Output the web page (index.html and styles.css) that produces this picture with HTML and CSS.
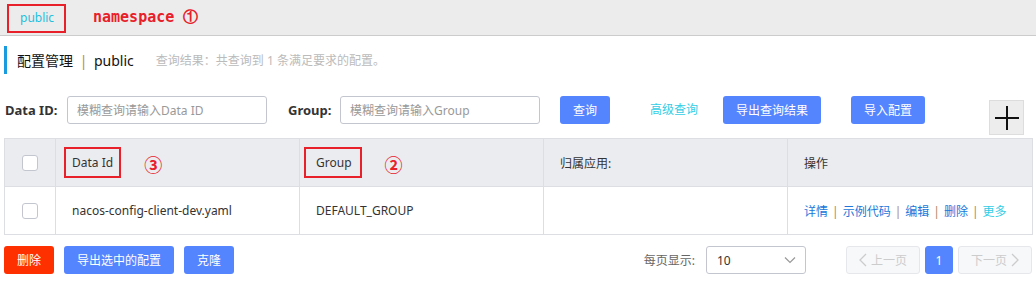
FILE: index.html
```html
<!DOCTYPE html>
<html lang="zh">

<head>
    <meta charset="UTF-8" />
    <meta name="viewport" content="width=device-width, initial-scale=1.0" />
    <title>配置管理</title>
    <link rel="stylesheet" href="styles.css">
</head>

<body>

    <!-- Namespace bar -->
    <div class="ns-bar">
        <span class="ns-tab mark">public</span>
        <span class="ns-note">namespace ①</span>
    </div>

    <div class="page">
        <!-- Title -->
        <div class="title-row">
            <h2>配置管理 <span class="sep">|</span> public</h2>
            <span class="result-tip">查询结果：共查询到 1 条满足要求的配置。</span>
        </div>

        <!-- Search -->
        <div class="search-row">
            <label class="field-label">Data ID:</label>
            <input class="field" type="text" placeholder="模糊查询请输入Data ID">
            <label class="field-label group-label">Group:</label>
            <input class="field" type="text" placeholder="模糊查询请输入Group">
            <button class="btn btn-query">查询</button>
            <a class="adv-link">高级查询</a>
            <button class="btn btn-export">导出查询结果</button>
            <button class="btn btn-import">导入配置</button>
            <button class="add-btn">
                <svg width="26" height="26" viewBox="0 0 26 26"><path d="M13 1v24M1 13h24" stroke="#111" stroke-width="2"/></svg>
            </button>
        </div>

        <!-- Table -->
        <table class="cfg-table">
            <colgroup>
                <col style="width:51px">
                <col style="width:244px">
                <col style="width:244px">
                <col style="width:244px">
                <col style="width:245px">
            </colgroup>
            <thead>
                <tr>
                    <th class="chk-cell"><span class="checkbox"></span></th>
                    <th><span class="mark head-mark">Data Id</span><span class="num">③</span></th>
                    <th><span class="mark head-mark group-mark">Group</span><span class="num">②</span></th>
                    <th>归属应用:</th>
                    <th>操作</th>
                </tr>
            </thead>
            <tbody>
                <tr>
                    <td class="chk-cell"><span class="checkbox"></span></td>
                    <td>nacos-config-client-dev.yaml</td>
                    <td>DEFAULT_GROUP</td>
                    <td></td>
                    <td class="ops">
                        <a>详情</a><span class="bar">|</span><a>示例代码</a><span class="bar">|</span><a>编辑</a><span class="bar">|</span><a>删除</a><span class="bar">|</span><a class="more">更多</a>
                    </td>
                </tr>
            </tbody>
        </table>

        <!-- Footer -->
        <div class="foot-row">
            <button class="btn btn-danger">删除</button>
            <button class="btn btn-export-sel">导出选中的配置</button>
            <button class="btn btn-clone">克隆</button>
            <div class="pager">
                <span class="pager-label">每页显示:</span>
                <div class="select">
                    <span>10</span>
                    <svg width="12" height="8" viewBox="0 0 12 8"><path d="M1 1.5l5 5 5-5" fill="none" stroke="#999" stroke-width="1.2"/></svg>
                </div>
                <button class="page-btn prev">
                    <svg width="8" height="14" viewBox="0 0 8 14"><path d="M7 1L1 7l6 6" fill="none" stroke="#ccc" stroke-width="1.3"/></svg>
                    上一页
                </button>
                <button class="page-btn current">1</button>
                <button class="page-btn next">
                    下一页
                    <svg width="8" height="14" viewBox="0 0 8 14"><path d="M1 1l6 6-6 6" fill="none" stroke="#ccc" stroke-width="1.3"/></svg>
                </button>
            </div>
        </div>
    </div>

</body>

</html>
```

FILE: styles.css
```css
* {
    box-sizing: border-box;
    margin: 0;
    padding: 0;
}

body {
    background: #fff;
    color: #333;
    font-family: "Noto Sans", "Noto Sans CJK SC", sans-serif;
    font-size: 12px;
}

.mark {
    border: 2px solid #e8202a;
}

/* Namespace bar */

.ns-bar {
    height: 36px;
    background: #ececec;
    border-bottom: 1px solid #ccc;
    display: flex;
    align-items: flex-start;
    padding: 4px 0 0 7px;
}

.ns-tab {
    width: 59px;
    height: 29px;
    color: #1ec0de;
    padding: 3px 0 0 11px;
    font-size: 12px;
}

.ns-note {
    margin: 4px 0 0 27px;
    color: #e8202a;
    font-family: "DejaVu Sans Mono", monospace;
    font-weight: bold;
    font-size: 15px;
}

.page {
    padding: 0 4px;
}

/* Title */

.title-row {
    margin-top: 10px;
    height: 28px;
    display: flex;
    align-items: center;
    border-left: 3px solid #1a9be0;
    padding-left: 10px;
}

.title-row h2 {
    font-size: 14px;
    font-weight: normal;
    color: #111;
}

.title-row .sep {
    color: #c38a28;
    margin: 0 3px;
}

.result-tip {
    margin-left: 22px;
    color: #bbb;
    font-size: 12px;
}

/* Search */

.search-row {
    margin-top: 22px;
    display: flex;
    align-items: flex-start;
    height: 42px;
}

.field-label {
    font-weight: bold;
    font-size: 13px;
    color: #333;
    line-height: 28px;
    width: 63px;
    padding-left: 1px;
}

.group-label {
    margin-left: 20px;
    width: 53px;
}

.field {
    width: 200px;
    height: 28px;
    border: 1px solid #c4c6cf;
    border-radius: 3px;
    padding: 0 9px;
    font: inherit;
    font-size: 12px;
}

.field::placeholder {
    color: #999;
}

.btn {
    height: 28px;
    border: none;
    border-radius: 3px;
    background: #5584ff;
    color: #fff;
    font: inherit;
    font-size: 12px;
    cursor: pointer;
}

.btn-query {
    width: 50px;
    margin-left: 20px;
}

.adv-link {
    color: #33cde5;
    line-height: 28px;
    margin-left: 40px;
}

.btn-export {
    width: 98px;
    margin-left: 25px;
}

.btn-import {
    width: 74px;
    margin-left: 30px;
}

.add-btn {
    margin-left: 64px;
    margin-top: 4px;
    width: 35px;
    height: 35px;
    background: #ededed;
    border: 1px solid #ddd;
    display: flex;
    align-items: center;
    justify-content: center;
}

/* Table */

.cfg-table {
    width: 1028px;
    border-collapse: collapse;
    table-layout: fixed;
}

.cfg-table th,
.cfg-table td {
    border: 1px solid #dcdee3;
    height: 48px;
    text-align: left;
    padding: 0 16px;
    font-weight: normal;
    color: #333;
}

.cfg-table th {
    background: #ebecf0;
}

.cfg-table .chk-cell {
    padding: 0 0 0 17px;
}

.checkbox {
    display: block;
    width: 16px;
    height: 16px;
    border: 1px solid #c4c6cf;
    border-radius: 3px;
    background: #fff;
}

.head-mark {
    display: inline-block;
    padding: 5px 6px;
    margin-left: -8px;
}

.group-mark {
    margin-left: -12px;
    padding: 5px 8px 5px 10px;
}

.num {
    color: #e8202a;
    font-size: 18px;
    font-weight: bold;
    margin-left: 23px;
    vertical-align: middle;
}

.ops a {
    color: #2077da;
}

.ops .bar {
    color: #b0865a;
    margin: 0 4px;
}

.ops .more {
    color: #33cde5;
}

/* Footer */

.foot-row {
    margin-top: 11px;
    display: flex;
    align-items: center;
}

.btn-danger {
    background: #ff3000;
    width: 50px;
}

.btn-export-sel {
    width: 110px;
    margin-left: 10px;
}

.btn-clone {
    width: 50px;
    margin-left: 10px;
}

.pager {
    margin-left: auto;
    display: flex;
    align-items: center;
}

.pager-label {
    color: #666;
    margin-right: 11px;
}

.select {
    width: 100px;
    height: 28px;
    border: 1px solid #c4c6cf;
    border-radius: 3px;
    display: flex;
    align-items: center;
    justify-content: space-between;
    padding: 0 9px 0 10px;
    color: #333;
    margin-right: 40px;
}

.page-btn {
    height: 28px;
    border: 1px solid #e6e7eb;
    border-radius: 3px;
    background: #f7f8fa;
    color: #ccc;
    font: inherit;
    font-size: 12px;
    display: flex;
    align-items: center;
    justify-content: center;
    gap: 4px;
}

.prev,
.next {
    width: 74px;
}

.current {
    width: 28px;
    margin: 0 5px;
    background: #5584ff;
    border-color: #5584ff;
    color: #fff;
}
```
